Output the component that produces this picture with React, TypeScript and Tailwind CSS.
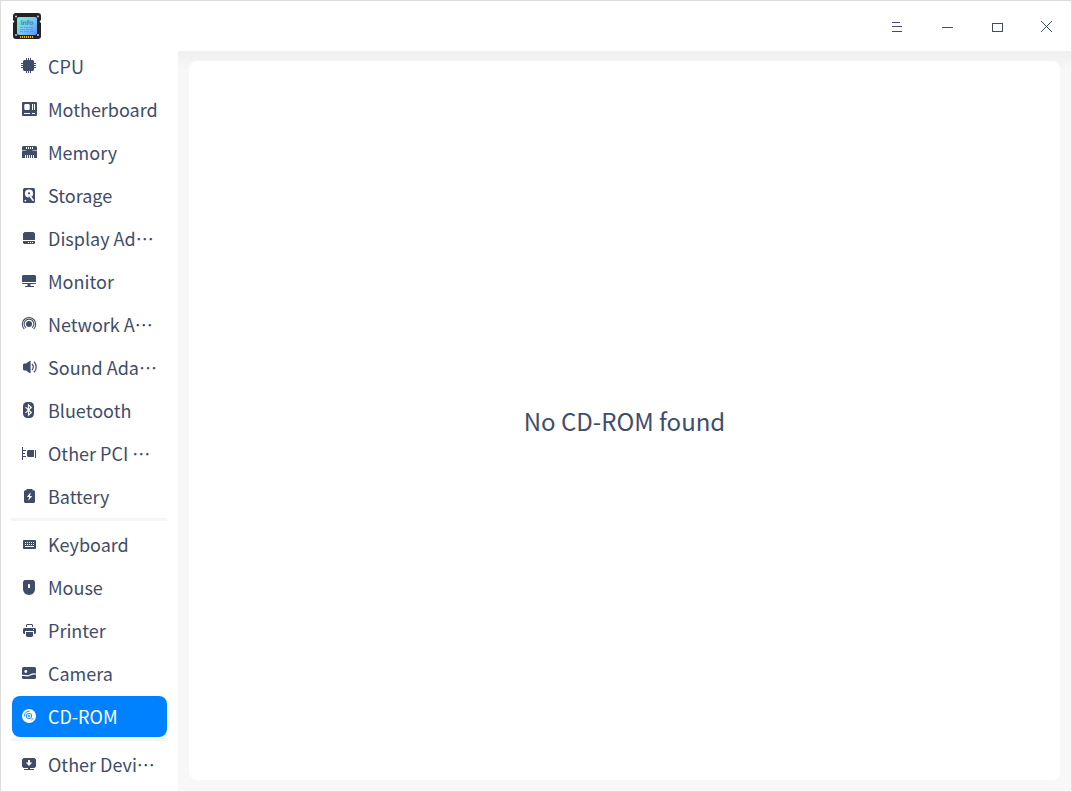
import type { ReactNode } from 'react';

const INK = '#414d68';

type Item = { label: string; icon: ReactNode; active?: boolean };

const cpu = (
  <path d="M3 2h2V0h1v2h1V0h1v2h1V0h1v2h2l1 1v2h2v1h-2v1h2v1h-2v1h2v1h-2v2l-1 1h-2v2H9v-2H8v2H7v-2H6v2H5v-2H3l-1-1v-2H0V9h2V8H0V7h2V6H0V5h2V3z" />
);

const motherboard = (
  <>
    <rect x="1" y="1" width="15" height="14" rx="1" />
    <g fill="#fff">
      <rect x="3.3" y="3" width="5.4" height="6" rx="1.2" />
      <path d="M11 3h1v6h-1zM13 3h1v6h-1zM3 12h6v1H3zM11 12h3v1h-3z" />
    </g>
  </>
);

const memory = (
  <>
    <path d="M2 2h13l1 1v3l-1 .6 1 .8V14H1V7.400l1-.8L1 6V3z" />
    <path
      fill="#fff"
      d="M5 3h1v2H5zM7 3h1v2H7zM9 3h1v2H9zM11 3h1v2h-1zM2 6.400h2.500L6 7.100H2zM15 6.400h-3L10.500 7.100H15zM4 11h1v3H4zM6 11h1v3H6zM8 11h1v3H8zM10 11h1v3h-1zM12 11h1v3h-1z"
    />
  </>
);

const storage = (
  <>
    <rect x="2" y="1" width="12" height="15" rx="1.5" />
    <circle cx="8" cy="6.500" r="4.100" fill="#fff" />
    <circle cx="8" cy="6.300" r="1.100" />
    <path d="M8.500 9l4 5.500" stroke={INK} strokeWidth="2.600" />
    <path d="M8.700 8.700l3.400 4.500" stroke="#fff" strokeWidth="1.700" strokeLinecap="round" />
    <circle cx="4.400" cy="13.600" r="0.900" fill="#fff" />
  </>
);

const display = (
  <>
    <path d="M3.500 2h9L14 3.500V10H2V3.500zM2 11h12v2l-1 1H3l-1-1z" />
    <path fill="#fff" d="M7 12h1v1H7zM9 12h1v1H9zM11 12h1v1h-1z" />
  </>
);

const monitor = <path d="M2 2h12l1 1v6H1V3zM1 10h14v.500l-.600.500H9.500v2H13v1H4v-1h2.500v-2H1.600L1 10.500z" />;

const network = (
  <>
    <circle cx="8" cy="8" r="3" />
    <g fill="none" stroke={INK} strokeWidth="1.100">
      <path d="M4.900 11.800a4.900 4.900 0 1 1 6.200 0" />
      <path d="M3.300 13a6.700 6.700 0 1 1 9.400 0" />
    </g>
  </>
);

const sound = (
  <>
    <path d="M2 5.500L3 4.600h2L9 1.800h.600v12.400H9L5 11.400H3l-1-.900z" />
    <g fill="none" stroke={INK} strokeWidth="1.200">
      <path d="M11 5a4.500 4.500 0 0 1 0 6" />
      <path d="M13 2.700a7.400 7.400 0 0 1 0 10.600" />
    </g>
  </>
);

const bluetooth = (
  <>
    <rect x="2" y="0" width="11" height="16" rx="4.200" />
    <path d="M4.500 5.200l5.800 5.300-2.800 2.700V2.800l2.800 2.700-5.800 5.300" fill="none" stroke="#fff" strokeWidth="1.150" />
  </>
);

const pci = (
  <path d="M1 2h1v3h3v1H2v2h2v1H2v2h3v1H2v3H1zM7 5h5.500l.500.500v6l-.500.500H7l-1-1V6zM14 5h1v8h-1z" />
);

const battery = (
  <>
    <path d="M5.500 1h6v1.200H13l1 1V14l-1 1H4l-1-1V3.200l1-1h1.500z" />
    <path fill="#fff" d="M9.700 4.300L5.900 9h2.200l-.800 3.700L11.200 8H9z" />
  </>
);

const keyboard = (
  <>
    <rect x="2" y="4" width="13" height="9" rx="0.800" />
    <path
      fill="#fff"
      d="M4 6h1v1H4zM6 6h1v1H6zM8 6h1v1H8zM10 6h1v1h-1zM12 6h1v1h-1zM4 8h1v1H4zM6 8h1v1H6zM8 8h1v1H8zM10 8h1v1h-1zM12 8h1v1h-1zM4 10h9v1H4z"
    />
  </>
);

const mouse = (
  <>
    <path d="M3.500 1h9L14 2.500v7.300C14 13.500 11.500 16 8 16s-6-2.500-6-6.200V2.500z" />
    <rect x="7" y="5" width="2" height="4" rx="0.600" fill="#fff" />
  </>
);

const printer = (
  <>
    <path d="M6 2h5l1 1v2h-1V3H6v2H5V3zM3 6h11l1 1v4l-1 1h-1V9H4v3H3l-1-1V7zM5 10h7v4l-1 1H6l-1-1z" />
    <path fill="#fff" d="M12 7h1v1h-1z" />
  </>
);

const camera = (
  <>
    <rect x="1" y="2" width="14" height="12" rx="1.500" />
    <circle cx="4.800" cy="6.500" r="1.400" fill="#fff" />
    <path d="M1 10.500c3.500-.200 4 .400 6 .300s4-2.800 8-1.600" fill="none" stroke="#fff" strokeWidth="1.200" />
  </>
);

const disc = (
  <>
    <circle cx="8" cy="8" r="7" fill="#fff" />
    <g fill="none" stroke="#0081ff" strokeWidth="0.900">
      <circle cx="8" cy="8" r="2.700" />
      <path d="M3.300 8.500A4.700 4.700 0 0 1 8.500 3.300M10.500 12a4.700 4.700 0 0 0 1.700-1.700" />
    </g>
    <circle cx="8" cy="8" r="1" fill="#0081ff" />
  </>
);

const other = (
  <>
    <path d="M2.500 2h11L15 3.500v7L13.500 12H9v1h4v1H3v-1h4v-1H2.500L1 10.500v-7z" />
    <path fill="#fff" d="M7 4h2v2.500h2.300L8 10 4.700 6.500H7z" />
  </>
);

const groups: Item[][] = [
  [
    { label: 'CPU', icon: cpu },
    { label: 'Motherboard', icon: motherboard },
    { label: 'Memory', icon: memory },
    { label: 'Storage', icon: storage },
    { label: 'Display Ad…', icon: display },
    { label: 'Monitor', icon: monitor },
    { label: 'Network A…', icon: network },
    { label: 'Sound Ada…', icon: sound },
    { label: 'Bluetooth', icon: bluetooth },
    { label: 'Other PCI …', icon: pci },
    { label: 'Battery', icon: battery },
  ],
  [
    { label: 'Keyboard', icon: keyboard },
    { label: 'Mouse', icon: mouse },
    { label: 'Printer', icon: printer },
    { label: 'Camera', icon: camera },
    { label: 'CD-ROM', icon: disc, active: true },
  ],
  [{ label: 'Other Devi…', icon: other }],
];

function Logo() {
  return (
    <svg width="30" height="28" viewBox="0 0 30 28">
      <defs>
        <linearGradient id="chip" x1="0" y1="0" x2="1" y2="1">
          <stop offset="0" stopColor="#7df0cf" />
          <stop offset="0.500" stopColor="#79c8f3" />
          <stop offset="1" stopColor="#5a93ff" />
        </linearGradient>
      </defs>
      <path d="M4 1h22q3 0 3 3v4l-1.500 1.500L29 11v13q0 3-3 3H4q-3 0-3-3V11l1.500-1.500L1 8V4q0-3 3-3z" fill="#222326" />
      <rect x="5" y="5" width="20" height="18" rx="2" fill="url(#chip)" />
      <g fill="#c9cbd0">
        <circle cx="4" cy="4.500" r="1" />
        <circle cx="26" cy="4.500" r="1" />
        <circle cx="4" cy="23" r="1" />
        <circle cx="26" cy="23" r="1" />
      </g>
      <text x="8.400" y="13" fontSize="6.500" fontWeight="700" fontFamily="DejaVu Sans, sans-serif" textLength="13" fill="#4592a3">
        info
      </text>
      <path d="M8 15.500h3m1 0h4m1 0h4M8 17.500h5m1 0h3m1 0h3M8 19.500h3m1 0h5m1 0h3" stroke="#4b91bd" strokeWidth="0.600" />
      <path d="M8 24h1v2H8zM10 24h1v2h-1zM12 24h1v2h-1zM14 24h1v2h-1zM16 24h1v2h-1zM18 24h1v2h-1zM20 24h1v2h-1z" fill="#f5b21c" />
    </svg>
  );
}

function WindowButton({ children }: { children: ReactNode }) {
  return (
    <button className="flex h-[50px] w-[50px] items-center justify-center">
      <svg
        width="12"
        height="12"
        viewBox="0 0 12 12"
        shapeRendering="crispEdges"
        fill={INK}
        className="mt-1 ml-[2px] overflow-visible"
      >
        {children}
      </svg>
    </button>
  );
}

function Row({ item }: { item: Item }) {
  return (
    <li
      className={
        item.active
          ? 'flex h-[41px] rounded-lg bg-[#0081ff] pl-[9px] text-white'
          : 'flex h-[41px] rounded-lg pl-[9px] text-[#414d68]'
      }
    >
      <svg width="16" height="16" viewBox="0 0 16 16" fill={INK} className="mt-3 shrink-0">
        {item.icon}
      </svg>
      <span className="ml-[11px] text-[18px] leading-[41px] whitespace-nowrap">{item.label}</span>
    </li>
  );
}

export default function App() {
  return (
    <div
      lang="zh-CN"
      className="flex h-[792px] w-[1072px] flex-col overflow-hidden border border-[#dcdcdc] bg-white font-['Noto_Sans_CJK_SC',sans-serif] text-[#414d68]"
    >
      <header className="flex h-[50px] shrink-0 items-center justify-between pl-[11px]">
        <Logo />
        <div className="flex">
          <WindowButton>
            <path d="M1 0h8v1H1zM1 4h10v1H1zM1 9h10v1H1z" />
          </WindowButton>
          <WindowButton>
            <path d="M1 5h11v1H1z" />
          </WindowButton>
          <WindowButton>
            <path d="M1 1h11v9H1zM2 2v7h9V2z" fillRule="evenodd" />
          </WindowButton>
          <WindowButton>
            <path d="M0 -1h1v1h-1zM1 0h1v1h-1zM2 1h1v1h-1zM3 2h1v1h-1zM4 3h1v1h-1zM5 4h1v1h-1zM6 5h1v1h-1zM7 6h1v1h-1zM8 7h1v1h-1zM9 8h1v1h-1zM10 9h1v1h-1zM10 -1h1v1h-1zM9 0h1v1h-1zM8 1h1v1h-1zM7 2h1v1h-1zM6 3h1v1h-1zM4 5h1v1h-1zM3 6h1v1h-1zM2 7h1v1h-1zM1 8h1v1h-1zM0 9h1v1h-1z" />
          </WindowButton>
        </div>
      </header>
      <div className="flex min-h-0 flex-1">
        <nav className="w-[177px] shrink-0 overflow-hidden pr-[11px] pl-[10px]">
          <div className="-mt-[5px]">
            {groups.map((group, i) => (
              <div key={i}>
                {i > 0 && <div className="mt-px mb-[3px] h-[3px] bg-[#f5f5f5]" />}
                <ul className="flex flex-col gap-[2px] pl-px">
                  {group.map((item) => (
                    <Row key={item.label} item={item} />
                  ))}
                </ul>
              </div>
            ))}
          </div>
        </nav>
        <main className="flex flex-1 bg-[#f8f8f8] bg-[linear-gradient(to_bottom,#efefef,#f8f8f8_20px)] pt-[10px] pr-[11px] pb-[11px] pl-[11px]">
          <section className="flex flex-1 items-center justify-center rounded-lg bg-white pt-px text-[24px] leading-none">
            No CD-ROM found
          </section>
        </main>
      </div>
    </div>
  );
}
